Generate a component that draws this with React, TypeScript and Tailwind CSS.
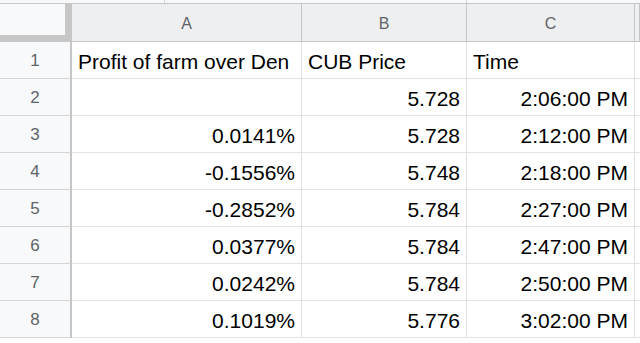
const rows: [string, string, string][] = [
  ['Profit of farm over Den', 'CUB Price', 'Time'],
  ['', '5.728', '2:06:00 PM'],
  ['0.0141%', '5.728', '2:12:00 PM'],
  ['-0.1556%', '5.748', '2:18:00 PM'],
  ['-0.2852%', '5.784', '2:27:00 PM'],
  ['0.0377%', '5.784', '2:47:00 PM'],
  ['0.0242%', '5.784', '2:50:00 PM'],
  ['0.1019%', '5.776', '3:02:00 PM'],
]

const font = { fontFamily: '"Liberation Sans", Arial, sans-serif' }

function Cell({ text, right }: { text: string; right: boolean }) {
  return (
    <div
      className={`h-[37px] flex items-center pt-[3px] border-r border-b border-[#e2e2e2] px-[6px] text-[21px] leading-none text-black whitespace-nowrap overflow-hidden ${
        right ? 'justify-end' : 'justify-start'
      }`}
    >
      {text}
    </div>
  )
}

export default function App() {
  return (
    <div className="w-[640px] h-[343px] overflow-hidden bg-white" style={font}>
      {/* strip of the toolbar above the grid */}
      <div className="h-[4px] grid grid-cols-[165px_302px_1fr] bg-[#f8f9fa] border-b border-[#c6c6c6]">
        <div className="border-r border-[#d6d6d6]" />
        <div className="border-r border-[#d6d6d6]" />
        <div />
      </div>

      <div className="grid grid-cols-[72px_230px_165px_168px_1fr]">
        {/* column headers */}
        <div className="h-[38px] bg-[#f8f9fa] border-r-[7px] border-b-[7px] border-[#c6c6c6]" />
        {['A', 'B', 'C', ''].map((h, i) => (
          <div
            key={i}
            className="h-[38px] flex items-center justify-center pt-[3px] bg-[#eeeff1] border-r border-b border-[#c6c6c6] text-[16px] text-[#5f6368]"
          >
            {h}
          </div>
        ))}

        {rows.map((r, i) => (
          <div key={i} className="contents">
            <div className="h-[37px] flex items-center justify-center pt-[2px] bg-[#f8f9fa] border-r-2 border-b border-r-[#c6c6c6] border-b-[#d4d4d4] text-[17px] text-[#5f6368]">
              {i + 1}
            </div>
            <Cell text={r[0]} right={i > 0} />
            <Cell text={r[1]} right={i > 0} />
            <Cell text={r[2]} right={i > 0} />
            <div className="h-[37px] border-b border-[#e2e2e2]" />
          </div>
        ))}
      </div>
    </div>
  )
}
